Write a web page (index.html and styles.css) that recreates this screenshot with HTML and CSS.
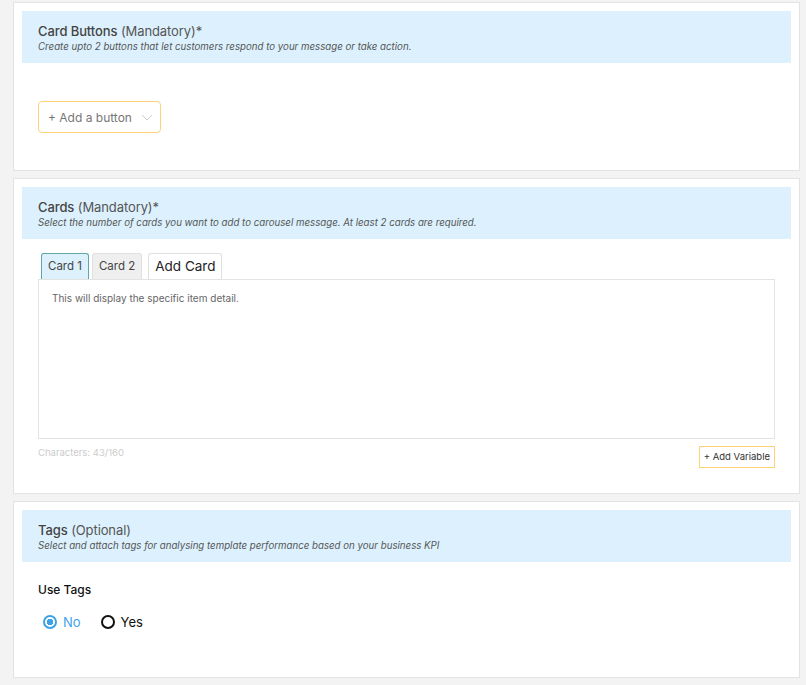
FILE: index.html
```html
<!DOCTYPE html>
<html lang="en">
<head>
  <meta charset="UTF-8">
  <title>Carousel Template</title>
  <link rel="stylesheet" href="styles.css">
</head>
<body>

  <section class="panel">
    <div class="panel-head">
      <h3><b>Card Buttons</b> (Mandatory)*</h3>
      <p>Create upto 2 buttons that let customers respond to your message or take action.</p>
    </div>
    <div class="btn-area">
      <div class="add-btn">
        <span>+ Add a button</span>
        <svg width="12" height="7" viewBox="0 0 12 7"><path d="M1 1l5 5 5-5" fill="none" stroke="#cfcfcf" stroke-width="1"/></svg>
      </div>
    </div>
  </section>

  <section class="panel">
    <div class="panel-head">
      <h3><b>Cards</b> (Mandatory)*</h3>
      <p>Select the number of cards you want to add to carousel message. At least 2 cards are required.</p>
    </div>
    <div class="cards-body">
      <div class="tabs">
        <span class="tab active">Card 1</span>
        <span class="tab grey">Card 2</span>
        <span class="tab add">Add Card</span>
      </div>
      <div class="textbox">This will display the specific item detail.</div>
      <div class="textbox-foot">
        <span class="count">Characters: 43/160</span>
        <span class="add-var">+ Add Variable</span>
      </div>
    </div>
  </section>

  <section class="panel">
    <div class="panel-head">
      <h3><b>Tags</b> (Optional)</h3>
      <p>Select and attach tags for analysing template performance based on your business KPI</p>
    </div>
    <div class="tags-body">
      <div class="label">Use Tags</div>
      <div class="radios">
        <label class="radio on"><span class="dot"></span>No</label>
        <label class="radio"><span class="dot"></span>Yes</label>
      </div>
    </div>
  </section>

  <section class="panel stub"></section>

</body>
</html>
```

FILE: styles.css
```css
body {
  margin: 0;
  padding: 2px 6px 0 13px;
  background: #f3f3f3;
  font-family: Inter, 'Noto Sans', sans-serif;
  color: #444;
}
.panel {
  background: #fff;
  border: 1px solid #e3e3e3;
  padding: 8px;
  margin-bottom: 7px;
}
.panel-head {
  background: #dcf1fd;
  height: 52px;
  box-sizing: border-box;
  padding: 12px 16px 0 16px;
}
.panel-head h3 {
  margin: 0;
  font-size: 13px;
  font-weight: 400;
  color: #555;
  line-height: 17px;
  letter-spacing: -0.1px;
}
.panel-head h3 b {
  font-weight: 500;
  color: #444;
}
.panel-head p {
  margin: 0;
  font-size: 9.7px;
  font-style: italic;
  color: #555;
  line-height: 14px;
}
.btn-area {
  padding: 38px 16px 29px;
}
.add-btn {
  width: 123px;
  height: 32px;
  box-sizing: border-box;
  border: 1px solid #ffd27a;
  border-radius: 4px;
  display: flex;
  align-items: center;
  justify-content: space-between;
  padding: 0 7px 0 9px;
  font-size: 12px;
  color: #777;
}
.cards-body {
  padding: 14px 16px 17px;
}
.tabs {
  display: flex;
  gap: 3px;
  padding-left: 3px;
}
.tab {
  font-size: 11.5px;
  color: #444;
  border: 1px solid #e0e0e0;
  border-bottom: none;
  border-radius: 3px 3px 0 0;
  padding: 0 6px;
  height: 25px;
  line-height: 25px;
}
.tab.active {
  background: #ddf1fd;
  border-color: #5fa8a8;
}
.tab.grey {
  background: #efefef;
}
.tab.add {
  background: #fff;
  font-size: 13.5px;
  color: #222;
  margin-left: 3px;
}
.textbox {
  border: 1px solid #e3e3e3;
  height: 160px;
  box-sizing: border-box;
  padding: 12px 13px;
  font-size: 10px;
  color: #666;
}
.textbox-foot {
  display: flex;
  justify-content: space-between;
  align-items: flex-start;
  margin-top: 7px;
}
.count {
  font-size: 9.5px;
  color: #ccc;
  margin-top: 1px;
}
.add-var {
  border: 1px solid #ffd27a;
  font-size: 9.5px;
  color: #333;
  height: 22px;
  line-height: 20px;
  box-sizing: border-box;
  padding: 0 4px;
}
.tags-body {
  padding: 20px 16px 39px;
}
.label {
  font-size: 12px;
  font-weight: 500;
  color: #111;
}
.radios {
  display: flex;
  gap: 20px;
  margin-top: 17px;
  padding-left: 5px;
}
.radio {
  display: flex;
  align-items: center;
  gap: 6px;
  font-size: 13px;
  color: #111;
}
.radio .dot {
  width: 14px;
  height: 14px;
  box-sizing: border-box;
  border: 2px solid #111;
  border-radius: 50%;
}
.radio.on {
  color: #3ea2e8;
}
.radio.on .dot {
  border-color: #3ea2e8;
  background: radial-gradient(circle, #3ea2e8 3px, #fff 3.5px);
}
.stub {
  height: 20px;
  margin-bottom: 0;
}
```
